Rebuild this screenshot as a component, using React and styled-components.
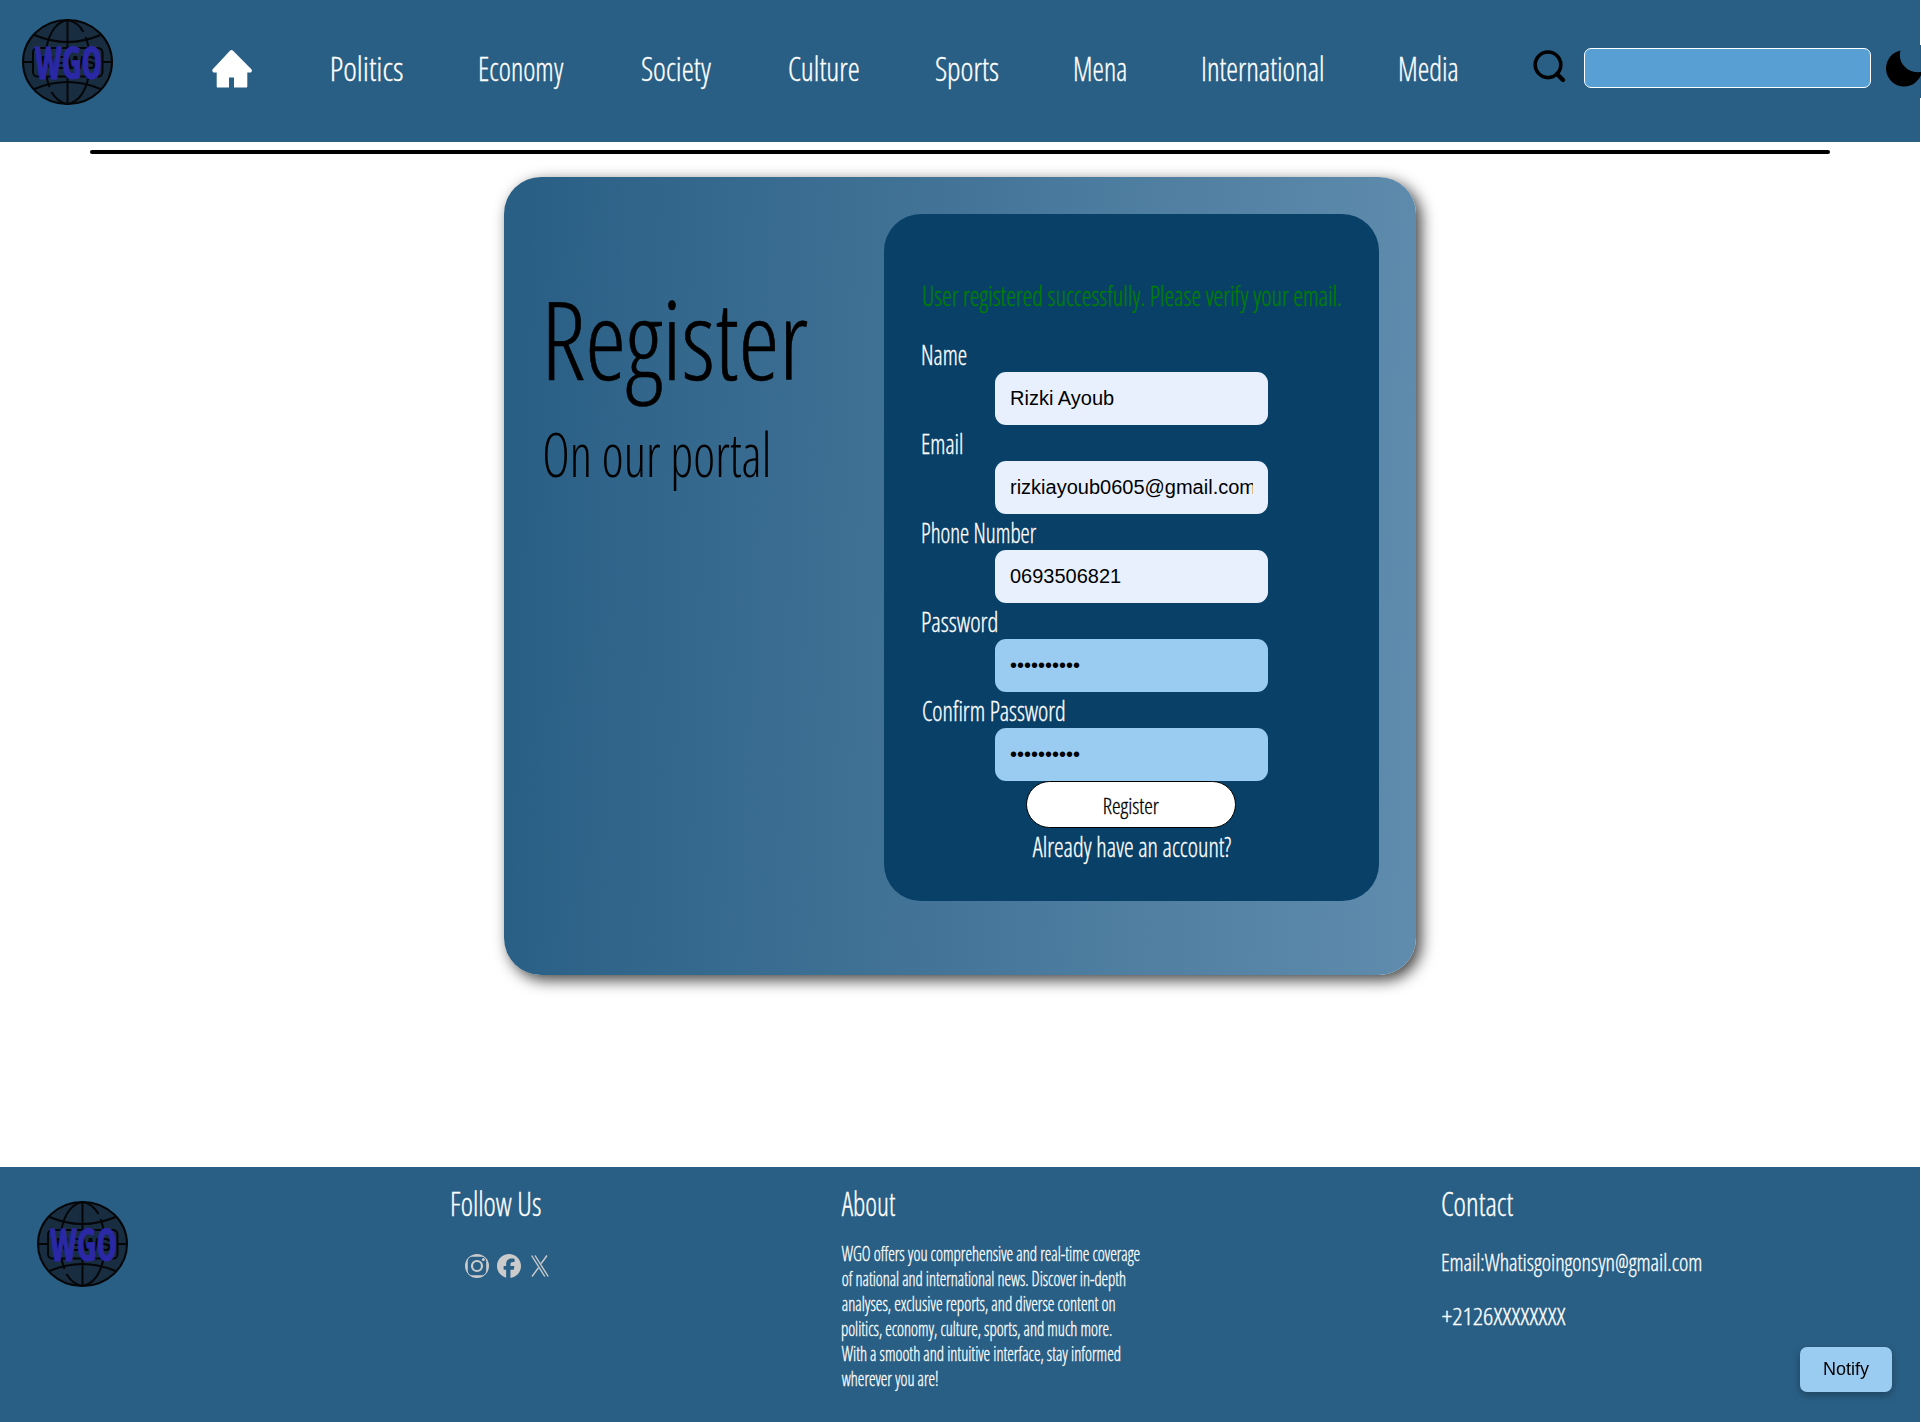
import React, { useLayoutEffect, useState } from "react";
import styled, { createGlobalStyle } from "styled-components";
import { FaFacebook } from "react-icons/fa6";

const NAVY = "#094067";
const BLUE = "#2a5f85";
const SKY = "#9accf2";

const GlobalStyle = createGlobalStyle`
  * { box-sizing: border-box; }
  html { overflow: hidden; background: #fff; }
  body {
    margin: 0;
    overflow: hidden;
    font-family: "Open Sans", "Liberation Sans", sans-serif;
    font-stretch: condensed;
    font-weight: 300;
    color: #000;
  }
`;

/* Condensed display text, squeezed to an exact drawn width. */
const FitBox = styled.span`
  display: block;
  flex: none;
  width: ${(p) => p.$width}px;
  font-size: ${(p) => p.$size}px;
  line-height: ${(p) => p.$line}px;
  height: ${(p) => p.$line}px;
  color: ${(p) => p.$color || "#fff"};
  -webkit-text-stroke: ${(p) => (p.$size < 40 ? 0.3 : p.$size > 100 ? 0.6 : 0)}px currentColor;
  white-space: nowrap;
`;

const FitInner = styled.span`
  display: inline-block;
  vertical-align: top;
  transform-origin: 0 0;
`;

function Fit({ children, width, size, line, color }) {
  const [fit, setFit] = useState({ scale: 1, shift: 0 });
  useLayoutEffect(() => {
    const ctx = document.createElement("canvas").getContext("2d");
    ctx.font = `300 ${size}px "Open Sans"`;
    ctx.fontStretch = "condensed";
    const m = ctx.measureText(children);
    const scale = (width - 1.2) / (m.actualBoundingBoxRight + m.actualBoundingBoxLeft);
    setFit({ scale, shift: m.actualBoundingBoxLeft * scale + 0.8 });
  }, [children, width, size]);
  return (
    <FitBox $width={width} $size={size} $line={line} $color={color}>
      <FitInner style={{ transform: `translateX(${fit.shift}px) scaleX(${fit.scale})` }}>
        {children}
      </FitInner>
    </FitBox>
  );
}

const Page = styled.div`
  width: 1920px;
  height: 1422px;
`;

const Header = styled.header`
  display: flex;
  align-items: center;
  height: 142px;
  padding: 0 0 6px 21px;
  background: ${BLUE};
`;

const LogoSvg = styled.svg`
  display: block;
  flex: none;
  width: 93px;
  height: 88px;
  overflow: visible;
`;

const HeaderLogo = styled.a`
  margin-bottom: 12px;
`;

const HomeLink = styled.a`
  margin: 1px 0 0 98px;
  svg { display: block; width: 40px; height: 38px; }
`;

const Nav = styled.nav`
  display: flex;
  gap: 76px;
  margin-left: 79px;
`;

const SearchIcon = styled.svg`
  flex: none;
  width: 34px;
  height: 34px;
  margin: 0 0 3px 75px;
`;

const SearchInput = styled.input`
  flex: none;
  width: 287px;
  height: 40px;
  margin-left: 17px;
  padding: 0 10px;
  border: 1px solid #fff;
  border-radius: 7px;
  background: #589fd4;
  outline: none;
`;

const ThemeButton = styled.button`
  flex: none;
  width: 54px;
  height: 53px;
  margin: 6px 0 0 7px;
  padding: 0 8px 6px;
  border: 0;
  background: ${BLUE};
  svg { display: block; width: 38px; height: 37px; }
`;

const Rule = styled.hr`
  width: 1740px;
  height: 4px;
  margin: 8px auto 23px;
  border: 0;
  border-radius: 2px;
  background: #000;
`;

const Card = styled.main`
  display: flex;
  justify-content: space-between;
  align-items: flex-start;
  width: 912px;
  height: 798px;
  margin: 0 auto 192px;
  padding: 37px;
  border-radius: 37px;
  background: linear-gradient(92deg, ${BLUE} 2%, #5f8cad 99%);
  box-shadow: 5px 5px 15px rgba(0, 0, 0, 0.75);
`;

const Intro = styled.section`
  padding: 49px 0 0 3px;
  > :first-child { margin: 0 0 1px 4px; }
`;

const Form = styled.form`
  width: 495px;
  height: 687px;
  padding: 62px 37px 0;
  border-radius: 37px;
  background: ${NAVY};
`;

const Message = styled.div`
  margin: 0 0 20px 1px;
`;

const Label = styled.label`
  display: block;
  height: 36px;
  padding: 1px 0 0 1px;
`;

const Input = styled.input`
  display: block;
  width: 273px;
  height: 53px;
  margin: 0 auto;
  padding: 0 15px;
  border: 0;
  border-radius: 11px;
  background: ${(p) => (p.$filled ? "#e8f0fe" : SKY)};
  color: #000;
  font: 400 20px "Liberation Sans", Arial, sans-serif;
  outline: none;
`;

const Submit = styled.button`
  display: flex;
  align-items: center;
  justify-content: center;
  width: 210px;
  height: 47px;
  margin: 0 0 0 105px;
  border: 1px solid #000;
  border-radius: 24px;
  background: #fff;
  font: inherit;
`;

const LoginLink = styled.a`
  display: flex;
  justify-content: center;
  padding-top: 1px;
`;

const Footer = styled.footer`
  display: grid;
  grid-template-columns: 451px 390px 600px 1fr;
  height: 255px;
  padding-top: 11px;
  background: ${BLUE};
`;

const FooterLogo = styled.div`
  padding: 22px 0 0 36px;
`;

const Socials = styled.div`
  display: flex;
  gap: 8px;
  margin: 26px 0 0 14px;
  color: #cbcbcb;
  svg { display: block; width: 24px; height: 24px; }
`;

const About = styled.div`
  margin-top: 13px;
`;

const Contact = styled.div`
  display: grid;
  gap: 14px;
  margin-top: 14px;
`;

const Notify = styled.button`
  position: fixed;
  right: 29px;
  bottom: 30px;
  width: 92px;
  height: 45px;
  padding: 0 0 1px;
  border: 0;
  border-radius: 7px;
  background: ${SKY};
  color: #000;
  font: 400 18px "Liberation Sans", Arial, sans-serif;
  box-shadow: 0 3px 8px rgba(0, 0, 0, 0.3);
`;

function Logo() {
  return (
    <LogoSvg viewBox="-46.5 -44 93 88">
      <ellipse rx="44.5" ry="42" fill="#182d40" stroke="#050608" strokeWidth="2" />
      <g fill="none" stroke="#050608" strokeWidth="2">
        <path d="M0 -42V-14M0 14V42M-44 0H-35M35 0H44" />
        <path d="M0 -42C-11 -40 -18 -29 -21 -15M-21 15C-20 19 -19 23 -18 25M-16 30C-12 37 -6 41 0 42" />
        <path d="M0 42C11 40 18 29 21 15M21 -15C20 -19 19 -23 18 -25M16 -30C12 -37 6 -41 0 -42" />
        <path d="M-33 -27Q0 -13 33 -27M-33 27Q0 13 33 27" />
        <rect x="-34.5" y="-14" width="69.5" height="28.5" rx="4.5" />
      </g>
      <text x="-27" y="7" fontFamily="Liberation Sans, sans-serif" fontWeight="700" fontSize="19" textLength="56" lengthAdjust="spacingAndGlyphs" fill="#050608">NEWS</text>
      <text x="-32.5" y="17" fontFamily="Open Sans, sans-serif" fontWeight="700" fontSize="44.5" textLength="67" lengthAdjust="spacingAndGlyphs" fill="#2b28a6" stroke="#2b28a6" strokeWidth="0.9">WGO</text>
    </LogoSvg>
  );
}

const links = [
  ["Politics", 72],
  ["Economy", 85.5],
  ["Society", 71],
  ["Culture", 71],
  ["Sports", 63.5],
  ["Mena", 52],
  ["International", 121],
  ["Media", 58.5],
];

const fields = [
  ["Name", 45, "text", "Rizki Ayoub"],
  ["Email", 41, "text", "rizkiayoub0605@gmail.com"],
  ["Phone Number", 115, "text", "0693506821"],
  ["Password", 75, "password", "abcdefghij"],
  ["Confirm Password", 142.5, "password", "abcdefghij"],
];

const about = [
  ["WGO offers you comprehensive and real-time coverage", 299],
  ["of national and international news. Discover in-depth", 284.5],
  ["analyses, exclusive reports, and diverse content on", 274],
  ["politics, economy, culture, sports, and much more.", 271],
  ["With a smooth and intuitive interface, stay informed", 280],
  ["wherever you are!", 97],
];

export default function App() {
  return (
    <Page>
      <GlobalStyle />
      <Header>
        <HeaderLogo><Logo /></HeaderLogo>
        <HomeLink>
          <svg viewBox="0 0 40 38" fill="#fff">
            <path d="M18.2 .6Q19.5 -.5 20.8 .6L39.4 19.2Q40.6 20.8 39 22.6H35.3V36.4Q35.3 37.6 34.1 37.6H22V27.4H17V37.6H5.9Q4.7 37.6 4.7 36.4V22.6H1.4Q-.5 21 .7 19.2Z" />
          </svg>
        </HomeLink>
        <Nav>
          {links.map(([name, width]) => (
            <Fit key={name} width={width} size={33.6} line={50}>{name}</Fit>
          ))}
        </Nav>
        <SearchIcon viewBox="0 0 34 34" fill="none" stroke="#000">
          <circle cx="15" cy="14.8" r="12.8" strokeWidth="3.6" />
          <path d="M24 24L30 30" strokeWidth="4.4" strokeLinecap="round" />
        </SearchIcon>
        <SearchInput />
        <ThemeButton>
          <svg viewBox="0 0 38 37"><path d="M14.5 .5A18.2 18.2 0 1 0 36 22C22 24 11 13 14.5 .5Z" /></svg>
        </ThemeButton>
      </Header>
      <Rule />
      <Card>
        <Intro>
          <Fit width={260} size={109} line={150} color="#000">Register</Fit>
          <Fit width={225} size={61} line={80} color="#000">On our portal</Fit>
        </Intro>
        <Form>
          <Message>
            <Fit width={419} size={27.4} line={40} color="#008000">
              User registered successfully. Please verify your email.
            </Fit>
          </Message>
          {fields.map(([name, width, type, value]) => (
            <React.Fragment key={name}>
              <Label><Fit width={width} size={27} line={36}>{name}</Fit></Label>
              <Input type={type} defaultValue={value} $filled={type === "text"} />
            </React.Fragment>
          ))}
          <Submit type="button">
            <Fit width={56} size={22} line={30} color="#000">Register</Fit>
          </Submit>
          <LoginLink>
            <Fit width={200} size={27} line={36}>Already have an account?</Fit>
          </LoginLink>
        </Form>
      </Card>
      <Footer>
        <FooterLogo><Logo /></FooterLogo>
        <div>
          <Fit width={90} size={33.6} line={50}>Follow Us</Fit>
          <Socials>
            <svg viewBox="0 0 24 24">
              <circle cx="12" cy="12" r="12" fill="currentColor" />
              <rect x="2.8" y="2.8" width="18.4" height="18.4" rx="4.5" fill={BLUE} />
              <circle cx="12" cy="12" r="5" fill="none" stroke="currentColor" strokeWidth="2.2" />
              <circle cx="18.4" cy="5.6" r="1.5" fill="currentColor" />
            </svg>
            <FaFacebook />
            <svg viewBox="0 0 24 24" fill="none" stroke="currentColor" strokeWidth="1.4">
              <path d="M2.6 1.5L15.8 22.5M6 1.5L19.2 22.5M18 1.5L12.2 9.5M9.3 14L3 22.5" />
            </svg>
          </Socials>
        </div>
        <div>
          <Fit width={55} size={33.6} line={50}>About</Fit>
          <About>
            {about.map(([text, width]) => (
              <Fit key={text} width={width} size={19.2} line={25}>{text}</Fit>
            ))}
          </About>
        </div>
        <div>
          <Fit width={73} size={33.6} line={50}>Contact</Fit>
          <Contact>
            <Fit width={261} size={24.7} line={40}>Email:Whatisgoingonsyn@gmail.com</Fit>
            <Fit width={125} size={24.7} line={40}>+2126XXXXXXXX</Fit>
          </Contact>
        </div>
      </Footer>
      <Notify>Notify</Notify>
    </Page>
  );
}
